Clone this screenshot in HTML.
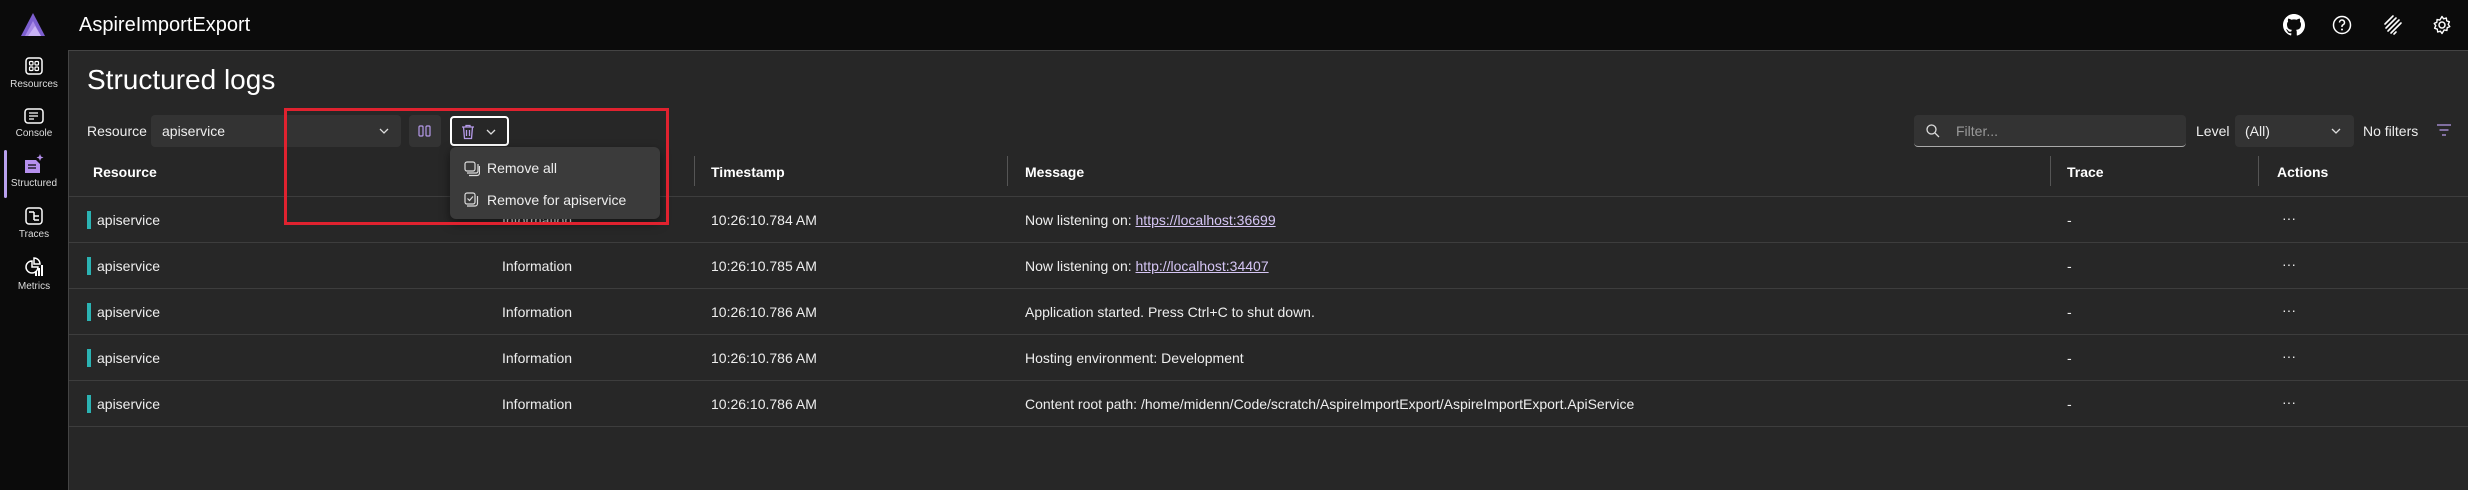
<!DOCTYPE html>
<html><head><meta charset="utf-8"><style>
*{box-sizing:border-box;margin:0;padding:0}
html{color-scheme:dark}
body{width:2468px;height:490px;background:#0b0b0b;font-family:"Liberation Sans",sans-serif;color:#fff;position:relative;overflow:hidden;font-size:14px}
.a{position:absolute}
.main{left:68px;top:50px;width:2400px;height:440px;background:#272727;border-top:1px solid #444;border-left:1px solid #444}
.nav{width:68px;text-align:center;font-size:10px;color:#ddd}
.nav svg{display:block;margin:0 auto 4px}
.sel{background:#333;border-radius:4px;height:32px}
.hd{font-weight:bold;font-size:14px;top:164px}
.vd{width:1px;background:#555;top:156px;height:30px}
.row{left:69px;width:2399px;height:1px;background:#3d3d3d}
.bar{width:4px;height:18px;background:#2bb3b3}
.t{font-size:14px;color:#eee}
a{color:#d6c6f5;text-decoration:underline}
</style></head><body>
<svg class="a" style="left:20px;top:12px" width="26" height="26" viewBox="0 0 26 26"><path d="M13 1 L25 24 H1 Z" fill="#7d5fd0"/><path d="M13 9 L21 24 H5 Z" fill="#a98ae8"/><path d="M8 24 L15 14 L21 24Z" fill="#c9b3f5"/></svg>
<div class="a" style="left:79px;top:14px;font-size:20px">AspireImportExport</div>
<svg class="a" style="left:2283px;top:14px" width="22" height="22" viewBox="0 0 16 16"><path fill="#fff" d="M8 0C3.58 0 0 3.58 0 8c0 3.54 2.290 6.53 5.47 7.59.4.07.55-.17.55-.38v-1.33c-2.23.48-2.7-1.07-2.7-1.070-.36-.92-.89-1.17-.89-1.17-.73-.5.06-.49.06-.49.8.06 1.23.83 1.23.83.71 1.22 1.87.87 2.330.66.07-.52.28-.87.5-1.07-1.78-.2-3.64-.89-3.64-3.95 0-.87.31-1.59.82-2.15-.08-.2-.36-1.02.08-2.12 0 0 .67-.21 2.2.82a7.6 7.6 0 0 1 4 0c1.53-1.04 2.2-.82 2.2-.82.44 1.1.16 1.92.08 2.12.51.56.82 1.27.82 2.15 0 3.07-1.87 3.75-3.65 3.95.29.25.54.73.54 1.48v2.2c0 .21.15.46.55.38A8 8 0 0 0 16 8c0-4.42-3.58-8-8-8z"/></svg>
<svg class="a" style="left:2332px;top:15px" width="20" height="20" viewBox="0 0 20 20"><circle cx="10" cy="10" r="8.5" fill="none" stroke="#fff" stroke-width="1.5"/><path d="M7.5 7.5a2.5 2.5 0 1 1 3.5 2.3c-.7.3-1 .8-1 1.5v.7" fill="none" stroke="#fff" stroke-width="1.5"/><circle cx="10" cy="14.5" r="1" fill="#fff"/></svg>
<svg class="a" style="left:2382px;top:14px" width="22" height="22" viewBox="0 0 22 22"><path d="M3 10 L11 2 M4 14 L14 4 M6 17 L17 6 M9 19 L19 9 M12 20 L14 18" stroke="#fff" stroke-width="1.6" fill="none" stroke-linecap="round"/></svg>
<svg class="a" style="left:2432px;top:15px" width="20" height="20" viewBox="0 0 20 20"><circle cx="10" cy="10" r="3" fill="none" stroke="#fff" stroke-width="1.5"/><path d="M10 1.5l1.6 2.3 2.7-.8.4 2.8 2.7 1-1.2 2.5 1.6 2.3-2.6 1.1-.3 2.8-2.7-.6L10 18.5l-1.6-2.3-2.7.8-.4-2.8-2.7-1 1.2-2.5L2.2 8.4l2.6-1.1.3-2.8 2.7.6z" fill="none" stroke="#fff" stroke-width="1.4" stroke-linejoin="round"/></svg>
<div class="a nav" style="top:57px;left:0"><svg width="18" height="18" viewBox="0 0 18 18"><rect x="1" y="1" width="16" height="16" rx="3" fill="none" stroke="#fff" stroke-width="1.5"/><rect x="4.5" y="4.5" width="3.5" height="3.5" rx="1" fill="none" stroke="#fff" stroke-width="1.2"/><rect x="10" y="4.5" width="3.5" height="3.5" rx="1" fill="none" stroke="#fff" stroke-width="1.2"/><rect x="4.5" y="10" width="3.5" height="3.5" rx="1" fill="none" stroke="#fff" stroke-width="1.2"/><rect x="10" y="10" width="3.5" height="3.5" rx="1" fill="none" stroke="#fff" stroke-width="1.2"/></svg>Resources</div>
<div class="a nav" style="top:108px;left:0"><svg width="20" height="16" viewBox="0 0 20 16"><rect x="1" y="1" width="18" height="14" rx="3" fill="none" stroke="#fff" stroke-width="1.5"/><path d="M5 5h9M5 8h9M5 11h5" stroke="#fff" stroke-width="1.3"/></svg>Console</div>
<div class="a" style="left:4px;top:150px;width:3px;height:48px;background:#b9a1ee;border-radius:2px"></div>
<div class="a nav" style="top:154px;left:0"><svg width="22" height="20" viewBox="0 0 22 20"><path d="M2 6h11l4 4v9H2z" fill="#b690ee"/><path d="M5 11h8M5 14h8" stroke="#0b0b0b" stroke-width="1.2"/><path d="M17 0l1 2.5 2.5 1-2.5 1-1 2.5-1-2.5-2.5-1 2.5-1z" fill="#b690ee"/></svg>Structured</div>
<div class="a nav" style="top:207px;left:0"><svg width="18" height="18" viewBox="0 0 18 18"><rect x="1" y="1" width="16" height="16" rx="3" fill="none" stroke="#fff" stroke-width="1.5"/><path d="M4 5h5M9 5v8M9 9h5M9 13h5" stroke="#fff" stroke-width="1.5"/></svg>Traces</div>
<div class="a nav" style="top:257px;left:0"><svg width="20" height="20" viewBox="0 0 20 20"><path d="M8 4a6 6 0 1 0 6 6H8z" fill="none" stroke="#fff" stroke-width="1.5"/><path d="M10 1v6h6a6 6 0 0 0-6-6z" fill="none" stroke="#fff" stroke-width="1.5"/><rect x="11" y="14" width="2" height="5" fill="#fff"/><rect x="14" y="11" width="2" height="8" fill="#fff"/><rect x="17" y="8" width="2" height="11" fill="#fff"/></svg>Metrics</div>
<div class="a main"></div>
<div class="a" style="left:87px;top:64px;font-size:28px">Structured logs</div>
<div class="a t" style="left:87px;top:123px">Resource</div>
<div class="a sel" style="left:151px;top:115px;width:250px"><span class="a t" style="left:11px;top:8px">apiservice</span><svg class="a" style="left:228px;top:12px" width="10" height="8" viewBox="0 0 10 8"><path d="M1 2l4 4 4-4" stroke="#ddd" fill="none" stroke-width="1.3"/></svg></div>
<div class="a sel" style="left:409px;top:115px;width:32px"><svg class="a" style="left:9px;top:10px" width="14" height="12" viewBox="0 0 14 12"><rect x="1" y="1" width="4" height="10" rx="1" fill="none" stroke="#b59ae8" stroke-width="1.2"/><rect x="8" y="1" width="4" height="10" rx="1" fill="none" stroke="#b59ae8" stroke-width="1.2"/></svg></div>
<div class="a" style="left:450px;top:116px;width:59px;height:30px;border:2px solid #fff;border-radius:4px"><svg class="a" style="left:9px;top:6px" width="14" height="16" viewBox="0 0 14 16"><path d="M1 3h12M5 3V1.5h4V3M2.5 3l1 11.5h7l1-11.5M5.5 6v6M8.5 6v6" stroke="#b59ae8" fill="none" stroke-width="1.3"/></svg><svg class="a" style="left:34px;top:10px" width="10" height="8" viewBox="0 0 10 8"><path d="M1 2l4 4 4-4" stroke="#ddd" fill="none" stroke-width="1.3"/></svg></div>
<div class="a hd" style="left:93px">Resource</div>
<div class="a vd" style="left:694px"></div><div class="a hd" style="left:711px">Timestamp</div>
<div class="a vd" style="left:1007px"></div><div class="a hd" style="left:1025px">Message</div>
<div class="a vd" style="left:2050px"></div><div class="a hd" style="left:2067px">Trace</div>
<div class="a vd" style="left:2258px"></div><div class="a hd" style="left:2277px">Actions</div>
<div class="a row" style="top:196px"></div>
<div class="a" style="left:0;top:197px;width:2468px">
<div style="position:relative;height:46px"><div class="a bar" style="left:87px;top:14px"></div><span class="a t" style="left:97px;top:15px">apiservice</span><span class="a t" style="left:502px;top:15px">Information</span><span class="a t" style="left:711px;top:15px">10:26:10.784 AM</span><span class="a t" style="left:1025px;top:15px">Now listening on: <a>https://localhost:36699</a></span><span class="a t" style="left:2067px;top:15px">-</span><span class="a t" style="left:2282px;top:13px">···</span><div class="a row" style="left:69px;top:45px"></div></div>
<div style="position:relative;height:46px"><div class="a bar" style="left:87px;top:14px"></div><span class="a t" style="left:97px;top:15px">apiservice</span><span class="a t" style="left:502px;top:15px">Information</span><span class="a t" style="left:711px;top:15px">10:26:10.785 AM</span><span class="a t" style="left:1025px;top:15px">Now listening on: <a>http://localhost:34407</a></span><span class="a t" style="left:2067px;top:15px">-</span><span class="a t" style="left:2282px;top:13px">···</span><div class="a row" style="left:69px;top:45px"></div></div>
<div style="position:relative;height:46px"><div class="a bar" style="left:87px;top:14px"></div><span class="a t" style="left:97px;top:15px">apiservice</span><span class="a t" style="left:502px;top:15px">Information</span><span class="a t" style="left:711px;top:15px">10:26:10.786 AM</span><span class="a t" style="left:1025px;top:15px">Application started. Press Ctrl+C to shut down.</span><span class="a t" style="left:2067px;top:15px">-</span><span class="a t" style="left:2282px;top:13px">···</span><div class="a row" style="left:69px;top:45px"></div></div>
<div style="position:relative;height:46px"><div class="a bar" style="left:87px;top:14px"></div><span class="a t" style="left:97px;top:15px">apiservice</span><span class="a t" style="left:502px;top:15px">Information</span><span class="a t" style="left:711px;top:15px">10:26:10.786 AM</span><span class="a t" style="left:1025px;top:15px">Hosting environment: Development</span><span class="a t" style="left:2067px;top:15px">-</span><span class="a t" style="left:2282px;top:13px">···</span><div class="a row" style="left:69px;top:45px"></div></div>
<div style="position:relative;height:46px"><div class="a bar" style="left:87px;top:14px"></div><span class="a t" style="left:97px;top:15px">apiservice</span><span class="a t" style="left:502px;top:15px">Information</span><span class="a t" style="left:711px;top:15px">10:26:10.786 AM</span><span class="a t" style="left:1025px;top:15px">Content root path: /home/midenn/Code/scratch/AspireImportExport/AspireImportExport.ApiService</span><span class="a t" style="left:2067px;top:15px">-</span><span class="a t" style="left:2282px;top:13px">···</span><div class="a row" style="left:69px;top:45px"></div></div>
</div>
<div class="a sel" style="left:1914px;top:115px;width:272px;border-bottom:1px solid #aaa"><svg class="a" style="left:12px;top:9px" width="14" height="14" viewBox="0 0 14 14"><circle cx="5.5" cy="5.5" r="4.5" fill="none" stroke="#ddd" stroke-width="1.3"/><path d="M8.8 8.8L13 13" stroke="#ddd" stroke-width="1.3"/></svg><span class="a" style="left:42px;top:8px;color:#999">Filter...</span></div>
<div class="a t" style="left:2196px;top:123px">Level</div>
<div class="a sel" style="left:2235px;top:115px;width:119px"><span class="a t" style="left:10px;top:8px">(All)</span><svg class="a" style="left:96px;top:12px" width="10" height="8" viewBox="0 0 10 8"><path d="M1 2l4 4 4-4" stroke="#ddd" fill="none" stroke-width="1.3"/></svg></div>
<div class="a t" style="left:2363px;top:123px">No filters</div>
<svg class="a" style="left:2436px;top:124px" width="16" height="12" viewBox="0 0 16 12"><path d="M1 1h14M3.5 6h9M6 11h4" stroke="#b59ae8" stroke-width="1.3"/></svg>
<div class="a" style="left:450px;top:147px;width:210px;height:72px;background:#3b3b3b;border-radius:6px;box-shadow:0 4px 10px rgba(0,0,0,.5)">
<svg class="a" style="left:14px;top:14px" width="16" height="16" viewBox="0 0 16 16"><rect x="1" y="1" width="10" height="9" rx="2" fill="none" stroke="#ddd" stroke-width="1.2"/><path d="M3 12h9a2 2 0 0 0 2-2V3M5 14.5h8a2.5 2.5 0 0 0 2.5-2.5V5" stroke="#ddd" fill="none" stroke-width="1.2"/></svg>
<span class="a t" style="left:37px;top:13px">Remove all</span>
<svg class="a" style="left:14px;top:45px" width="16" height="16" viewBox="0 0 16 16"><rect x="1" y="1" width="10" height="11" rx="2" fill="none" stroke="#ddd" stroke-width="1.2"/><path d="M3.5 6.5l2 2 3.5-4M3 14h8a2.5 2.5 0 0 0 2.5-2.5V4" stroke="#ddd" fill="none" stroke-width="1.2"/></svg>
<span class="a t" style="left:37px;top:45px">Remove for apiservice</span>
</div>
<div class="a" style="left:284px;top:108px;width:385px;height:117px;border:3px solid #e0222f"></div>
</body></html>
